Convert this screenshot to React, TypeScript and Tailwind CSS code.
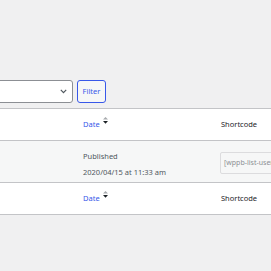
import React from "react";

const FONT = { fontFamily: '"Noto Sans", "Open Sans", Arial, sans-serif' };

function SortArrows() {
  return (
    <svg width="5" height="7" viewBox="0 0 5 7" className="ml-[3px] -mt-[9px] shrink-0">
      <path d="M2.5 0 L5 2.5 L0 2.5 Z" fill="#a7aaad" />
      <path d="M0 4 L5 4 L2.5 6.8 Z" fill="#1d2327" />
    </svg>
  );
}

function HeaderRow({ top }: { top?: boolean }) {
  return (
    <div
      className={`flex h-[32px] items-center bg-white ${
        top ? "border-b border-[#c3c4c7]" : "border-t border-[#c3c4c7]"
      }`}
    >
      <div className="w-[83px] shrink-0" />
      <div className="flex w-[138px] shrink-0 items-center">
        <span className="text-[7.5px] text-[#3858e9]">Date</span>
        <SortArrows />
      </div>
      <span className="text-[7.5px] whitespace-nowrap text-[#1d2327]">Shortcode</span>
    </div>
  );
}

export default function App() {
  return (
    <div
      className="relative h-[271px] w-[271px] overflow-hidden bg-[#f0f0f1]"
      style={FONT}
    >
      <div className="flex gap-[4px] pt-[80px]">
        <div className="-ml-[20px] flex h-[23px] w-[93px] shrink-0 items-center justify-end rounded-[3px] border border-[#8c8f94] bg-white pr-[5px]">
          <svg width="7" height="5" viewBox="0 0 7 5">
            <path d="M0.8 0.8 L3.5 3.6 L6.2 0.8" fill="none" stroke="#50575e" strokeWidth="1.2" />
          </svg>
        </div>
        <div className="flex h-[23px] w-[29px] shrink-0 items-center justify-center rounded-[3px] border border-[#3858e9] bg-[#f6f7f7] text-[7.5px] text-[#3858e9]">
          Filter
        </div>
      </div>

      <div className="mt-[5px] border-t border-[#c3c4c7]">
        <HeaderRow top />
        <div className="flex h-[41px] bg-[#f6f7f7]">
          <div className="w-[83px] shrink-0" />
          <div className="flex w-[137px] shrink-0 flex-col pt-[7px] text-[7.5px] leading-[16px] whitespace-nowrap text-[#50575e]">
            <span>Published</span>
            <span>2020/04/15 at 11:33 am</span>
          </div>
          <div className="shrink-0 pt-[11px]">
            <div className="flex h-[22px] w-[100px] items-center rounded-[2px] border border-[#dcdcde] bg-[#f6f7f7] pl-[3px] text-[7px] whitespace-nowrap text-[#8c8f94]">
              [wppb-list-users]
            </div>
          </div>
        </div>
        <HeaderRow />
        <div className="border-t border-[#c3c4c7]" />
      </div>
    </div>
  );
}
